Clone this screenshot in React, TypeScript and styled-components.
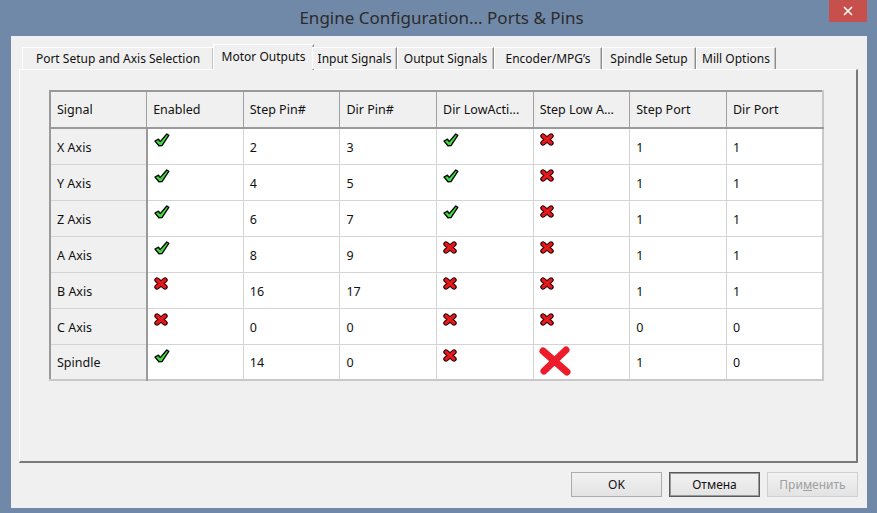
import styled, { createGlobalStyle } from 'styled-components'

const GlobalStyle = createGlobalStyle`
  html, body { margin: 0; padding: 0; }
  body { font-family: 'Noto Sans', 'Open Sans', sans-serif; background: #7189a8; }
`

type Mark = 'yes' | 'no' | 'big'

type Row = {
  signal: string
  enabled: Mark
  stepPin: string
  dirPin: string
  dirLow: Mark
  stepLow: Mark
  stepPort: string
  dirPort: string
}

const rows: Row[] = [
  { signal: 'X Axis', enabled: 'yes', stepPin: '2', dirPin: '3', dirLow: 'yes', stepLow: 'no', stepPort: '1', dirPort: '1' },
  { signal: 'Y Axis', enabled: 'yes', stepPin: '4', dirPin: '5', dirLow: 'yes', stepLow: 'no', stepPort: '1', dirPort: '1' },
  { signal: 'Z Axis', enabled: 'yes', stepPin: '6', dirPin: '7', dirLow: 'yes', stepLow: 'no', stepPort: '1', dirPort: '1' },
  { signal: 'A Axis', enabled: 'yes', stepPin: '8', dirPin: '9', dirLow: 'no', stepLow: 'no', stepPort: '1', dirPort: '1' },
  { signal: 'B Axis', enabled: 'no', stepPin: '16', dirPin: '17', dirLow: 'no', stepLow: 'no', stepPort: '1', dirPort: '1' },
  { signal: 'C Axis', enabled: 'no', stepPin: '0', dirPin: '0', dirLow: 'no', stepLow: 'no', stepPort: '0', dirPort: '0' },
  { signal: 'Spindle', enabled: 'yes', stepPin: '14', dirPin: '0', dirLow: 'no', stepLow: 'big', stepPort: '1', dirPort: '0' },
]

const tabs = [
  { label: 'Port Setup and Axis Selection', width: 192 },
  { label: 'Motor Outputs', width: 101, active: true },
  { label: 'Input Signals', width: 85 },
  { label: 'Output Signals', width: 97 },
  { label: 'Encoder/MPG\u2019s', width: 108 },
  { label: 'Spindle Setup', width: 94 },
  { label: 'Mill Options', width: 80 },
]

const headers = ['Signal', 'Enabled', 'Step Pin#', 'Dir Pin#', 'Dir LowActi...', 'Step Low A...', 'Step Port', 'Dir Port']

const CheckIcon = () => (
  <svg width="16" height="14" viewBox="0 0 16 14">
    <path
      d="M1 8 L4.5 6.2 L6.2 8.6 L12.8 1 L14.8 2.4 L13.6 4.2 L8 12.6 L5 12.8 Z"
      fill="#3ee03e"
      stroke="#0a0a0a"
      strokeWidth="1.4"
      strokeLinejoin="round"
    />
  </svg>
)

const CrossIcon = () => (
  <svg width="14" height="13" viewBox="0 0 14 13">
    <g strokeLinecap="round">
      <path d="M3 3 L11 10 M11 3 L3 10" stroke="#2a0000" strokeWidth="5.4" />
      <path d="M3 3 L11 10 M11 3 L3 10" stroke="#e4191c" strokeWidth="3.2" />
    </g>
  </svg>
)

const BigCrossIcon = () => (
  <svg width="34" height="32" viewBox="0 0 34 32">
    <path d="M5 6 L29 27 M28 5 L6 26" stroke="#ec1c2a" strokeWidth="7" strokeLinecap="round" />
  </svg>
)

const MarkIcon = ({ mark }: { mark: Mark }) =>
  mark === 'yes' ? <CheckIcon /> : mark === 'no' ? <CrossIcon /> : <BigCrossIcon />

const App = () => (
  <Window>
    <GlobalStyle />
    <TitleBar>
      <Title>Engine Configuration... Ports &amp; Pins</Title>
      <CloseButton>
        <svg width="10" height="10" viewBox="0 0 10 10">
          <path d="M1 1 L9 9 M9 1 L1 9" stroke="#fff" strokeWidth="1.6" />
        </svg>
      </CloseButton>
    </TitleBar>
    <Client>
      <TabStrip>
        {tabs.map((t) => (
          <Tab key={t.label} $active={!!t.active} style={{ width: t.width }}>
            {t.label}
          </Tab>
        ))}
      </TabStrip>
      <Panel>
        <Grid>
          <thead>
            <HeadRow>
              {headers.map((h) => (
                <Th key={h}>{h}</Th>
              ))}
            </HeadRow>
          </thead>
          <tbody>
            {rows.map((r) => (
              <BodyRow key={r.signal}>
                <RowHead>{r.signal}</RowHead>
                <IconCell $big={false}><MarkIcon mark={r.enabled} /></IconCell>
                <Td>{r.stepPin}</Td>
                <Td>{r.dirPin}</Td>
                <IconCell $big={false}><MarkIcon mark={r.dirLow} /></IconCell>
                <IconCell $big={r.stepLow === 'big'}><MarkIcon mark={r.stepLow} /></IconCell>
                <Td>{r.stepPort}</Td>
                <Td>{r.dirPort}</Td>
              </BodyRow>
            ))}
          </tbody>
        </Grid>
      </Panel>
      <ButtonRow>
        <Button>OK</Button>
        <Button $default>Отмена</Button>
        <Button $disabled>
          При<u>м</u>енить
        </Button>
      </ButtonRow>
    </Client>
  </Window>
)

export default App

const Window = styled.div`
  width: 877px;
  height: 513px;
  background: #7189a8;
  display: flex;
  flex-direction: column;
  overflow: hidden;
`

const TitleBar = styled.div`
  height: 36px;
  position: relative;
  display: flex;
  align-items: center;
  justify-content: center;
`

const Title = styled.div`
  font-size: 17px;
  color: #2b2b2b;
  margin-left: 6px;
  margin-top: -1px;
`

const CloseButton = styled.div`
  position: absolute;
  right: 10px;
  top: 0;
  width: 38px;
  height: 22px;
  background: #c7504d;
  display: flex;
  align-items: center;
  justify-content: center;
`

const Client = styled.div`
  flex: 1;
  margin: 0 10px 5px 11px;
  background: #f0f0f0;
  display: flex;
  flex-direction: column;
  padding: 8px 9px 0 8px;
`

const TabStrip = styled.div`
  display: flex;
  align-items: flex-end;
  height: 25px;
  padding-left: 3px;
  position: relative;
  z-index: 1;
`

const Tab = styled.div<{ $active: boolean }>`
  box-sizing: border-box;
  height: ${({ $active }) => ($active ? '26px' : '22px')};
  margin-bottom: ${({ $active }) => ($active ? '-1px' : '0')};
  margin-left: ${({ $active }) => ($active ? '-1px' : '0')};
  margin-right: ${({ $active }) => ($active ? '-2px' : '0')};
  border-top: 1px solid #ffffff;
  border-left: 1px solid #ffffff;
  border-right: 1px solid #8c8c8c;
  box-shadow: inset -1px 0 0 #c4c4c4;
  background: #f0f0f0;
  font-size: 12px;
  color: #111;
  display: flex;
  align-items: center;
  justify-content: center;
  padding-bottom: ${({ $active }) => ($active ? '3px' : '0')};
  white-space: nowrap;
`

const Panel = styled.div`
  height: 394px;
  box-sizing: border-box;
  border-top: 1px solid #ffffff;
  border-left: 1px solid #ffffff;
  border-right: 2px solid #7a7a7a;
  border-bottom: 2px solid #7a7a7a;
  padding: 20px 0 0 29px;
`

const Grid = styled.table`
  border-collapse: collapse;
  table-layout: fixed;
  width: 775px;
  background: #ffffff;
  border: 2px solid #9a9a9a;
  border-right-color: #c8c8c8;
  border-bottom-color: #c8c8c8;
  font-size: 12.5px;
  color: #111;
`

const HeadRow = styled.tr`
  height: 37px;
`

const BodyRow = styled.tr`
  height: 36px;
`

const Th = styled.th`
  background: #f0f0f0;
  text-align: left;
  font-weight: normal;
  padding: 0 6px;
  border-right: 1px solid #a0a0a0;
  border-bottom: 2px solid #9a9a9a;
  white-space: nowrap;
  overflow: hidden;
`

const Td = styled.td`
  padding: 2px 6px 0;
  border-right: 1px solid #d4d4d4;
  border-bottom: 1px solid #d4d4d4;
  vertical-align: middle;
`

const RowHead = styled(Td)`
  background: #f0f0f0;
  border-right: 2px solid #9a9a9a;
`

const IconCell = styled(Td)<{ $big: boolean }>`
  vertical-align: top;
  padding: ${({ $big }) => ($big ? '0 0 0 4px' : '4px 0 0 6px')};
  line-height: 0;
`

const ButtonRow = styled.div`
  display: flex;
  justify-content: flex-end;
  gap: 7px;
  padding: 9px 0 0;
`

const Button = styled.div<{ $default?: boolean; $disabled?: boolean }>`
  box-sizing: border-box;
  width: 91px;
  height: 25px;
  display: flex;
  align-items: center;
  justify-content: center;
  font-size: 12px;
  color: ${({ $disabled }) => ($disabled ? '#a0a0a0' : '#111')};
  background: linear-gradient(#f2f2f2, #e3e3e3);
  border: 1px solid ${({ $default, $disabled }) => ($default ? '#5a5a5a' : $disabled ? '#cfcfcf' : '#acacac')};
  box-shadow: ${({ $default }) => ($default ? 'inset 0 0 0 1px #9a9a9a' : 'none')};
`
